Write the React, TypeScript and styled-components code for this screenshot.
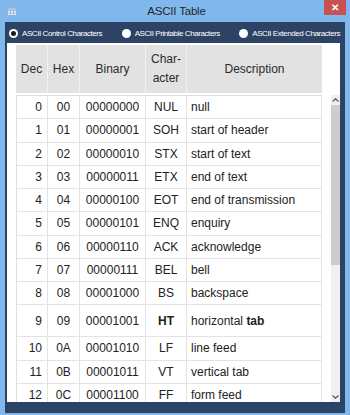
import React from "react";
import styled, { createGlobalStyle } from "styled-components";

const GlobalStyle = createGlobalStyle`
  body {
    margin: 0;
    font-family: "Liberation Sans", Arial, sans-serif;
  }
`;

const Window = styled.div`
  width: 350px;
  height: 415px;
  overflow: hidden;
  background: #80b7ec;
  display: flex;
  flex-direction: column;
`;

const TitleBar = styled.div`
  height: 22px;
  flex-shrink: 0;
  display: grid;
  grid-template-columns: 1fr auto 1fr;
  align-items: start;
  padding: 0 4px 0 7px;
`;

const AppIcon = styled.svg`
  margin-top: 7px;
`;

const Title = styled.div`
  font-size: 11.5px;
  letter-spacing: -0.2px;
  color: #262626;
  line-height: 22px;
`;

const CloseButton = styled.div`
  justify-self: end;
  width: 22px;
  height: 15px;
  background: #c75150;
  color: #fff;
  font-size: 10px;
  font-weight: bold;
  display: flex;
  align-items: center;
  justify-content: center;
`;

const Client = styled.div`
  flex: 1;
  min-height: 0;
  overflow: hidden;
  margin: 0 5px 2px 5px;
  background: #2c4366;
  display: flex;
  flex-direction: column;
`;

const RadioRow = styled.div`
  height: 20px;
  flex-shrink: 0;
  display: flex;
  align-items: center;
  justify-content: space-between;
  padding: 1px 5px 0 4px;
`;

const RadioOption = styled.div`
  display: flex;
  align-items: center;
  gap: 4px;
  color: #fff;
  font-size: 8px;
  letter-spacing: -0.42px;
`;

const RadioDot = styled.span<{ $checked?: boolean }>`
  width: 9px;
  height: 9px;
  border-radius: 50%;
  background: #fff;
  box-sizing: border-box;
  display: flex;
  align-items: center;
  justify-content: center;
  &::after {
    content: "";
    width: 5px;
    height: 5px;
    border-radius: 50%;
    background: ${(p) => (p.$checked ? "#1a1a1a" : "transparent")};
  }
`;

const Panel = styled.div`
  flex: 1;
  min-height: 0;
  overflow: hidden;
  margin: 0 5px 11px 2px;
  background: #fff;
  display: flex;
  flex-direction: column;
  padding-top: 2px;
`;

const HeaderRow = styled.div`
  margin-left: 9px;
  width: 306px;
  height: 48px;
  flex-shrink: 0;
  display: grid;
  grid-template-columns: 32px 32px 66px 41px 1fr;
  background: #e2e2e2;
`;

const HeaderCell = styled.div`
  display: flex;
  align-items: center;
  justify-content: center;
  text-align: center;
  font-size: 12px;
  line-height: 19px;
  color: #2b2b2b;
  border-right: 1px solid #f2f2f2;
  &:last-child {
    border-right: none;
  }
`;

const BodyArea = styled.div`
  flex: 1;
  min-height: 0;
  display: flex;
  gap: 9px;
  margin-top: 2px;
  padding-left: 9px;
`;

const Rows = styled.div`
  width: 306px;
  overflow: hidden;
  border-top: 1px solid #dedede;
  border-left: 1px solid #dedede;
  box-sizing: border-box;
`;

const Row = styled.div<{ $tall?: boolean }>`
  height: ${(p) => (p.$tall ? "32px" : "23.25px")};
  display: grid;
  grid-template-columns: 31px 32px 66px 41px 1fr;
  border-bottom: 1px solid #e3e3e3;
  box-sizing: border-box;
  font-size: 12px;
  color: #222;
`;

const Cell = styled.div<{ $align?: "left" | "center" | "right"; $bold?: boolean }>`
  display: flex;
  align-items: center;
  justify-content: ${(p) =>
    p.$align === "right" ? "flex-end" : p.$align === "left" ? "flex-start" : "center"};
  padding: ${(p) => (p.$align === "right" ? "0 5px 0 0" : p.$align === "left" ? "0 0 0 4px" : "0")};
  border-right: 1px solid #e3e3e3;
  font-weight: ${(p) => (p.$bold ? "bold" : "normal")};
  white-space: nowrap;
`;

const Scrollbar = styled.div`
  width: 9px;
  background: #f0f0f0;
  display: flex;
  flex-direction: column;
  align-items: center;
`;

const ScrollArrow = styled.svg`
  flex-shrink: 0;
  margin: 3px 0;
`;

const Thumb = styled.div`
  width: 9px;
  height: 160px;
  flex-shrink: 0;
  background: #cdcdcd;
`;

const Track = styled.div`
  flex: 1;
`;

const codes = [
  ["NUL", "null"],
  ["SOH", "start of header"],
  ["STX", "start of text"],
  ["ETX", "end of text"],
  ["EOT", "end of transmission"],
  ["ENQ", "enquiry"],
  ["ACK", "acknowledge"],
  ["BEL", "bell"],
  ["BS", "backspace"],
  ["HT", "horizontal tab"],
  ["LF", "line feed"],
  ["VT", "vertical tab"],
  ["FF", "form feed"],
];

function Description({ text }: { text: string }) {
  if (text === "horizontal tab") {
    return (
      <>
        horizontal&nbsp;<b>tab</b>
      </>
    );
  }
  return <>{text}</>;
}

export default function App() {
  return (
    <Window>
      <GlobalStyle />
      <TitleBar>
        <AppIcon width="10" height="9" viewBox="0 0 10 9">
          <rect x="0.5" y="0.5" width="9" height="8" fill="#e4eef9" stroke="#8fb0d6" />
          <rect x="1" y="1" width="8" height="2" fill="#a9c6e8" />
          <path d="M0.5 3.5h9M0.5 6h9M3.5 3v6M6.5 3v6" stroke="#9dbbe0" strokeWidth="1" />
        </AppIcon>
        <Title>ASCII Table</Title>
        <CloseButton>✕</CloseButton>
      </TitleBar>
      <Client>
        <RadioRow>
          <RadioOption>
            <RadioDot $checked />
            ASCII Control Characters
          </RadioOption>
          <RadioOption>
            <RadioDot />
            ASCII Printable Characters
          </RadioOption>
          <RadioOption>
            <RadioDot />
            ASCII Extended Characters
          </RadioOption>
        </RadioRow>
        <Panel>
          <HeaderRow>
            <HeaderCell>Dec</HeaderCell>
            <HeaderCell>Hex</HeaderCell>
            <HeaderCell>Binary</HeaderCell>
            <HeaderCell>
              Char-
              <br />
              acter
            </HeaderCell>
            <HeaderCell>Description</HeaderCell>
          </HeaderRow>
          <BodyArea>
            <Rows>
              {codes.map(([abbr, desc], i) => (
                <Row key={abbr} $tall={abbr === "HT"}>
                  <Cell $align="right">{i}</Cell>
                  <Cell>{i.toString(16).toUpperCase().padStart(2, "0")}</Cell>
                  <Cell>{i.toString(2).padStart(8, "0")}</Cell>
                  <Cell $bold={abbr === "HT"}>{abbr}</Cell>
                  <Cell $align="left">
                    <Description text={desc} />
                  </Cell>
                </Row>
              ))}
            </Rows>
            <Scrollbar>
              <ScrollArrow width="7" height="4" viewBox="0 0 7 4">
                <path d="M0.5 3.5L3.5 0.8L6.5 3.5" fill="none" stroke="#555" strokeWidth="1.2" />
              </ScrollArrow>
              <Thumb />
              <Track />
              <ScrollArrow width="7" height="4" viewBox="0 0 7 4">
                <path d="M0.5 0.5L3.5 3.2L6.5 0.5" fill="none" stroke="#555" strokeWidth="1.2" />
              </ScrollArrow>
            </Scrollbar>
          </BodyArea>
        </Panel>
      </Client>
    </Window>
  );
}
